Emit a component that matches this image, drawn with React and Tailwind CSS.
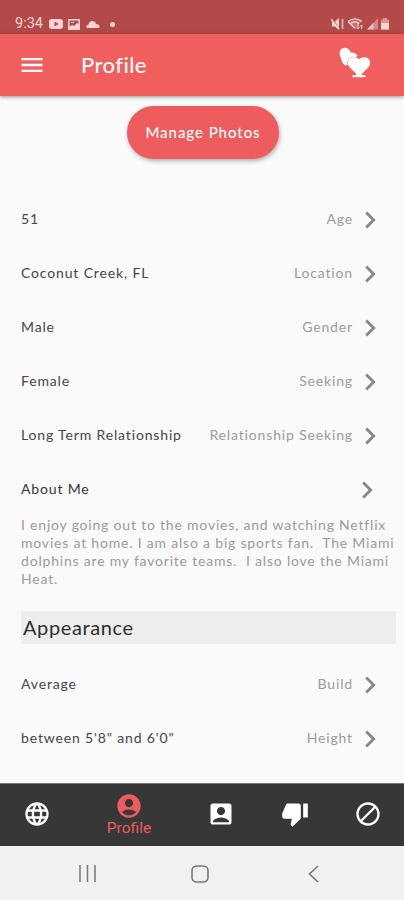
import React from "react";
import {
  MdAccountBox,
  MdAccountCircle,
  MdBlock,
  MdChevronRight,
  MdLanguage,
  MdMenu,
  MdThumbDown,
} from "react-icons/md";

const details = [
  { value: "51", label: "Age" },
  { value: "Coconut Creek, FL", label: "Location" },
  { value: "Male", label: "Gender" },
  { value: "Female", label: "Seeking" },
  { value: "Long Term Relationship", label: "Relationship Seeking" },
];

const appearance = [
  { value: "Average", label: "Build" },
  { value: "between 5'8\" and 6'0\"", label: "Height" },
];

const about = [
  "I enjoy going out to the movies, and watching Netflix",
  "movies at home. I am also a big sports fan.  The Miami",
  "dolphins are my favorite teams.  I also love the Miami",
  "Heat.",
];

const StatusBar = () => (
  <div className="flex h-[34px] shrink-0 items-end justify-between bg-[#b34a49] pr-[13px] pb-[3px] pl-[15px] text-[#f6d5d2]">
    <div className="flex items-center">
      <span className="w-[29px] font-[Roboto] text-[14.5px] leading-[14px] whitespace-nowrap">
        9:34
      </span>
      <svg className="ml-[5px]" width="14" height="10" viewBox="0 0 14 10">
        <rect width="14" height="10" rx="3" fill="currentColor" />
        <path d="M5.5 2.6v4.8L9.7 5z" fill="#b34a49" />
      </svg>
      <svg className="ml-[5px]" width="12" height="11" viewBox="0 0 12 11">
        <rect x=".8" y=".8" width="10.4" height="9.4" fill="none" stroke="currentColor" strokeWidth="1.5" />
        <path d="M1 8l3-2 2 1 3-3 2 1v5H1z" fill="currentColor" />
        <path d="M3 3.5h3" stroke="currentColor" />
      </svg>
      <svg className="ml-[6px]" width="14" height="9" viewBox="0 0 14 9" fill="currentColor">
        <path d="M2 8C.8 8 .3 7.3.3 6.5.3 5.5 1.2 5 2.3 5 2.8 2.5 4.3 1 6.3 1c2 0 3.2 1.2 3.7 3 2.2 0 3.5 1 3.5 2.4C13.5 7.4 12.8 8 12 8z" />
      </svg>
      <span className="ml-[10px] h-[5px] w-[5px] rounded-full bg-current" />
    </div>
    <svg width="60" height="14" viewBox="0 0 60 14" fill="currentColor">
      <path d="M1 4.5h3L8 1v12L4 9.5H1z" />
      <path d="M1 1l7 11" stroke="#b34a49" strokeWidth="1.2" />
      <path d="M0 2l8 10M11.5 2v10" stroke="currentColor" strokeWidth="1.4" />
      <path d="M17 4.2Q24 -1 31 4.2L24 11.5z" opacity=".3" />
      <path d="M17 4.5Q24 -1 31 4.5M19.5 6.7Q24 3 28 6.7M17 4.5l7 7" fill="none" stroke="currentColor" strokeWidth="1.2" />
      <path d="M27 7v5M25.5 10.5L27 12l1.4-1.5M30.5 12V8M29.2 9.5l1.3-1.5L32 9.5" fill="none" stroke="currentColor" />
      <path d="M47 1v11.5H36z" opacity=".45" />
      <path d="M42.5 5.8v6.7H36z" opacity=".7" />
      <path d="M52 2.5V1h4v1.5h2v10h-8v-10z" opacity=".55" />
      <path d="M50 6h8v6.5h-8z" />
    </svg>
  </div>
);

const HeartsLogo = () => (
  <svg width="32" height="32" viewBox="0 0 32 32" fill="#fff">
    <path d="M7 18.5C4 18 2.8 14.5 2 11.5 1.2 9 .3 7.5.7 5 1.2 2.2 3.5.5 6.2.7c3 .2 5 2 5.300 5C14.5 5 17.3 6.3 18.5 9L10 17z" />
    <path d="M20 29.5L11 20.8C9 18.8 8.7 16.5 9 14.7 9.7 10 16 9 20 12.3c4-3.300 10.300-2.300 11 2.400.3 1.800 0 4.100-2 6.100z" stroke="#f15e5e" strokeWidth="1" paintOrder="stroke" />
    <path d="M18 26h4q.3 1.800 2 2.200h2.500v2h-13v-2H16q1.700-.4 2-2.200z" />
  </svg>
);

const Header = () => (
  <header className="z-10 flex h-[62px] shrink-0 items-center bg-[#f15e5e] pr-[33px] pl-[18px] text-white shadow-[0_1px_4px_rgba(0,0,0,0.4)]">
    <MdMenu className="h-[28px] w-[28px]" />
    <h1 className="ml-[35px] text-[22px] leading-[28px] font-medium tracking-[0.4px]">
      Profile
    </h1>
    <div className="mb-[5px] ml-auto">
      <HeartsLogo />
    </div>
  </header>
);

const DetailRow = ({ value, label }) => (
  <div className="flex h-[54px] items-center text-[14px] tracking-[0.85px]">
    <span className="whitespace-nowrap text-[#45454b]">{value}</span>
    <span className="ml-auto whitespace-nowrap text-[#9b9b9b]">{label}</span>
    <MdChevronRight className="mt-[3px] mr-[9px] h-[34px] w-[34px] text-[#888]" />
  </div>
);

const BottomNav = () => (
  <nav className="flex h-[63px] shrink-0 items-center border-t border-[#777] bg-[#373738] pb-[2px] text-white">
    <MdLanguage className="ml-[23px] h-[28px] w-[28px]" />
    <div className="ml-[48px] flex w-[60px] flex-col items-center text-[#ee5c60]">
      <MdAccountCircle className="h-[28px] w-[28px]" />
      <span className="font-[Roboto] text-[15.5px] leading-[16px]">
        Profile
      </span>
    </div>
    <MdAccountBox className="ml-[48px] h-[28px] w-[28px]" />
    <MdThumbDown className="ml-[46px] h-[28px] w-[28px]" />
    <MdBlock className="ml-[45px] h-[28px] w-[28px]" />
  </nav>
);

const SystemNav = () => (
  <div className="flex h-[54px] shrink-0 items-center bg-[#f1f1f1] pt-[2px] pl-[79px]">
    <svg width="18" height="18" viewBox="0 0 18 18" stroke="#777" strokeWidth="1.5">
      <path d="M1 0v17M8.5 0v17M16 0v17" />
    </svg>
    <svg className="ml-[94px]" width="18" height="18" viewBox="0 0 18 18" fill="none" stroke="#777" strokeWidth="1.6">
      <rect x="1" y="1" width="16" height="16" rx="4.5" />
    </svg>
    <svg className="ml-[99px]" width="12" height="18" viewBox="0 0 12 18" fill="none" stroke="#777" strokeWidth="1.6">
      <path d="M10 1L1.5 9l8.5 8" />
    </svg>
  </div>
);

const App = () => {
  return (
    <div className="flex h-[900px] w-[404px] flex-col overflow-hidden bg-[#fafafa] font-[Lato,sans-serif]">
      <StatusBar />
      <Header />
      <main className="min-h-0 flex-1 overflow-hidden pr-[8px] pl-[21px]">
        <button
          className="mt-[10px] ml-[106px] block h-[53px] w-[152px] rounded-full bg-[#ef5c5e] text-[15px] font-medium tracking-[0.95px] whitespace-nowrap text-white shadow-[1px_2px_4px_rgba(0,0,0,0.3)]"
          type="button"
        >
          Manage Photos
        </button>
        <div className="mt-[32px]">
          {details.map((row) => (
            <DetailRow key={row.label} value={row.value} label={row.label} />
          ))}
        </div>
        <div className="flex h-[54px] items-center justify-between text-[14px] tracking-[0.85px] text-[#35353a]">
          <span>About Me</span>
          <MdChevronRight className="mt-[3px] mr-[12px] h-[34px] w-[34px] text-[#888]" />
        </div>
        <div className="mt-[1px] text-[14px] leading-[18px] tracking-[0.8px] whitespace-pre text-[#9b9b9b]">
          {about.map((line) => (
            <p key={line}>{line}</p>
          ))}
        </div>
        <h2 className="mt-[23px] mb-[12px] h-[33px] rounded-[2px] bg-[#ededed] pl-[2px] text-[20px] leading-[33px] tracking-[0.6px] text-[#2f2f2f]">
          Appearance
        </h2>
        {appearance.map((row) => (
          <DetailRow key={row.label} value={row.value} label={row.label} />
        ))}
      </main>
      <BottomNav />
      <SystemNav />
    </div>
  );
};

export default App;
